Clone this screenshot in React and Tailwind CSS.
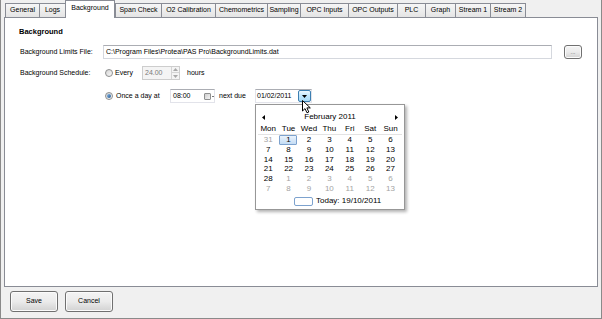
import React from "react";

const tabs = [
  ["General", 34],
  ["Logs", 26],
  ["Background", 50, true],
  ["Span Check", 46],
  ["O2 Calibration", 54],
  ["Chemometrics", 52],
  ["Sampling", 33],
  ["OPC Inputs", 48],
  ["OPC Outputs", 49],
  ["PLC", 28],
  ["Graph", 30],
  ["Stream 1", 35],
  ["Stream 2", 36],
];

const weeks = [
  [[31, 1], [1], [2], [3], [4], [5], [6]],
  [[7], [8], [9], [10], [11], [12], [13]],
  [[14], [15], [16], [17], [18], [19], [20]],
  [[21], [22], [23], [24], [25], [26], [27]],
  [[28], [1, 1], [2, 1], [3, 1], [4, 1], [5, 1], [6, 1]],
  [[7, 1], [8, 1], [9, 1], [10, 1], [11, 1], [12, 1], [13, 1]],
];

const dayNames = ["Mon", "Tue", "Wed", "Thu", "Fri", "Sat", "Sun"];

function Radio({ checked }) {
  return (
    <span className="flex w-[8px] h-[8px] shrink-0 items-center justify-center rounded-full border border-[#8e8f8f] bg-linear-to-br from-[#d4d4d4] to-[#fafafa]">
      {checked && (
        <span className="w-[4px] h-[4px] rounded-full bg-linear-to-br from-[#8ab8e6] to-[#1d5790]" />
      )}
    </span>
  );
}

function WinButton({ children, className }) {
  return (
    <div
      className={
        "flex items-center justify-center rounded-[3px] border border-[#707070] bg-linear-to-b from-[#f4f4f4] via-[#ebebeb] to-[#d2d2d2] shadow-[inset_0_0_0_1px_#fbfbfb] " +
        className
      }
    >
      {children}
    </div>
  );
}

export default function App() {
  return (
    <div className="relative w-[602px] h-[319px] overflow-hidden border-l border-r border-b border-[#8a8a8a] bg-[#f0f0f0] font-['Liberation_Sans',Arial,sans-serif] text-[7px] text-black">
      {/* Tab strip */}
      <div className="flex h-[17px] items-end pl-[4px]">
        {tabs.map(([name, w, sel], i) => (
          <div
            key={name}
            style={{ width: w }}
            className={
              sel
                ? "relative z-10 -mb-px flex h-[18px] shrink-0 items-center justify-center border-l border-t border-r border-[#898c95] bg-white pb-[2px]"
                : "flex h-[14px] shrink-0 items-center justify-center border-t border-l border-[#898c95] bg-linear-to-b from-[#f6f6f6] to-[#e4e4e4] " +
                  (i === tabs.length - 1 ? "border-r" : "")
            }
          >
            {name}
          </div>
        ))}
      </div>

      {/* Tab panel */}
      <div className="ml-[3px] flex h-[270px] w-[594px] flex-col border border-[#898c95] bg-white pl-[14px] pt-[9px]">
        <div className="h-[10px] text-[7.5px] font-bold leading-[10px]">Background</div>

        <div className="mt-[8px] flex h-[14px] items-center">
          <span className="w-[84px] shrink-0 pl-[1px]">Background Limits File:</span>
          <div className="flex h-[14px] w-[449px] items-center border border-[#d5d8de] border-t-[#abadb3] bg-white pl-[2px]">
            C:\Program Files\Protea\PAS Pro\BackgroundLimits.dat
          </div>
          <WinButton className="ml-[12px] h-[14px] w-[18px] border-[#8a8a8a]">
            <span className="mt-[1px] text-[6px] text-[#555]">...</span>
          </WinButton>
        </div>

        <div className="mt-[7px] flex h-[14px] items-center">
          <span className="w-[86px] shrink-0 pl-[1px]">Background Schedule:</span>
          <Radio />
          <span className="ml-[2px] w-[27px] shrink-0">Every</span>
          <div className="flex h-[14px] w-[38px] items-center border border-[#cdcdcd] bg-[#f4f4f4]">
            <span className="ml-[2px] w-[26px] text-[#7a7a7a]">24.00</span>
            <div className="flex h-[12px] w-[8px] flex-col border-l border-[#d4d4d4]">
              <div className="flex h-[6px] items-center justify-center border-b border-[#d4d4d4]">
                <svg width="5" height="3" viewBox="0 0 5 3">
                  <path d="M0 3 L2.5 0 L5 3 Z" fill="#a8a8a8" />
                </svg>
              </div>
              <div className="flex h-[6px] items-center justify-center">
                <svg width="5" height="3" viewBox="0 0 5 3">
                  <path d="M0 0 L2.5 3 L5 0 Z" fill="#a8a8a8" />
                </svg>
              </div>
            </div>
          </div>
          <span className="ml-[7px]">hours</span>
        </div>

        <div className="mt-[9px] flex h-[14px] items-center">
          <span className="w-[86px] shrink-0" />
          <Radio checked />
          <span className="ml-[3px] w-[54px] shrink-0">Once a day at</span>
          <div className="flex h-[14px] w-[45px] items-center border border-[#e2e3ea] border-t-[#abadb3] bg-white">
            <span className="ml-[2px] w-[31px]">08:00</span>
            <span className="h-[7px] w-[7px] rounded-[1px] border border-[#8e8f8f] bg-linear-to-br from-[#cfcfcf] to-[#f4f4f4]" />
            <span className="ml-[1px] h-px w-[2px] bg-[#777]" />
          </div>
          <span className="ml-[4px] w-[36px] shrink-0">next due</span>
          <div className="flex h-[14px] w-[57px] items-center border border-[#e2e3ea] border-t-[#abadb3] bg-white">
            <span className="ml-[1px] w-[41px]">01/02/2011</span>
            <div className="flex h-[12px] w-[13px] items-center justify-center rounded-[2px] border border-[#3c7fb1] bg-linear-to-b from-[#eaf6fd] via-[#bee6fd] to-[#a7d9f5]">
              <svg width="5" height="3" viewBox="0 0 5 3">
                <path d="M0 0 L5 0 L2.5 3 Z" fill="#000" />
              </svg>
            </div>
          </div>
        </div>
      </div>

      {/* Bottom buttons */}
      <div className="mt-[4px] flex">
        <WinButton className="ml-[9px] h-[21px] w-[48px]">Save</WinButton>
        <WinButton className="ml-[7px] h-[21px] w-[48px]">Cancel</WinButton>
      </div>

      {/* Calendar dropdown */}
      <div className="absolute left-[254px] top-[104px] flex h-[106px] w-[150px] flex-col border border-[#979797] bg-white text-[8px] shadow-[2px_2px_3px_rgba(0,0,0,0.3)]">
        <div className="mt-[5px] flex h-[14px] items-center justify-between px-[6px]">
          <svg width="3" height="5" viewBox="0 0 3 5">
            <path d="M3 0 L0 2.5 L3 5 Z" fill="#000" />
          </svg>
          <span>February 2011</span>
          <svg width="3" height="5" viewBox="0 0 3 5">
            <path d="M0 0 L3 2.5 L0 5 Z" fill="#000" />
          </svg>
        </div>
        <div className="mx-[2px] flex h-[11px] items-center border-b border-[#e3e3e3]">
          {dayNames.map((d) => (
            <span key={d} className="w-[20.4px] text-center">
              {d}
            </span>
          ))}
        </div>
        <div className="mx-[2px] flex flex-col">
          {weeks.map((wk, r) => (
            <div key={r} className="flex h-[9.85px] items-stretch">
              {wk.map(([n, g], c) => (
                <span key={c} className="relative flex w-[20.4px] items-center justify-center">
                  {r === 0 && c === 1 && (
                    <span className="absolute left-[1px] top-0 h-[10px] w-[18px] rounded-[1px] border border-[#7da2ce] bg-linear-to-b from-[#eaf3fc] to-[#c4dcf4]" />
                  )}
                  <span className={"relative " + (g ? "text-[#a3a3a3]" : "")}>{n}</span>
                </span>
              ))}
            </div>
          ))}
        </div>
        <div className="mt-[2px] flex h-[10px] items-center pl-[38px]">
          <span className="h-[9px] w-[19px] rounded-[2px] border border-[#7da2ce]" />
          <span className="ml-[3px]">Today: 19/10/2011</span>
        </div>
      </div>

      {/* Mouse cursor */}
      <svg className="absolute left-[301px] top-[100px]" width="10" height="14" viewBox="0 0 10 14">
        <path d="M0.5 0.5 L0.5 11 L3 8.6 L5 12.8 L6.8 12 L4.9 7.9 L8.3 7.9 Z" fill="#fff" stroke="#000" strokeWidth="1" strokeLinejoin="miter" />
      </svg>
    </div>
  );
}
